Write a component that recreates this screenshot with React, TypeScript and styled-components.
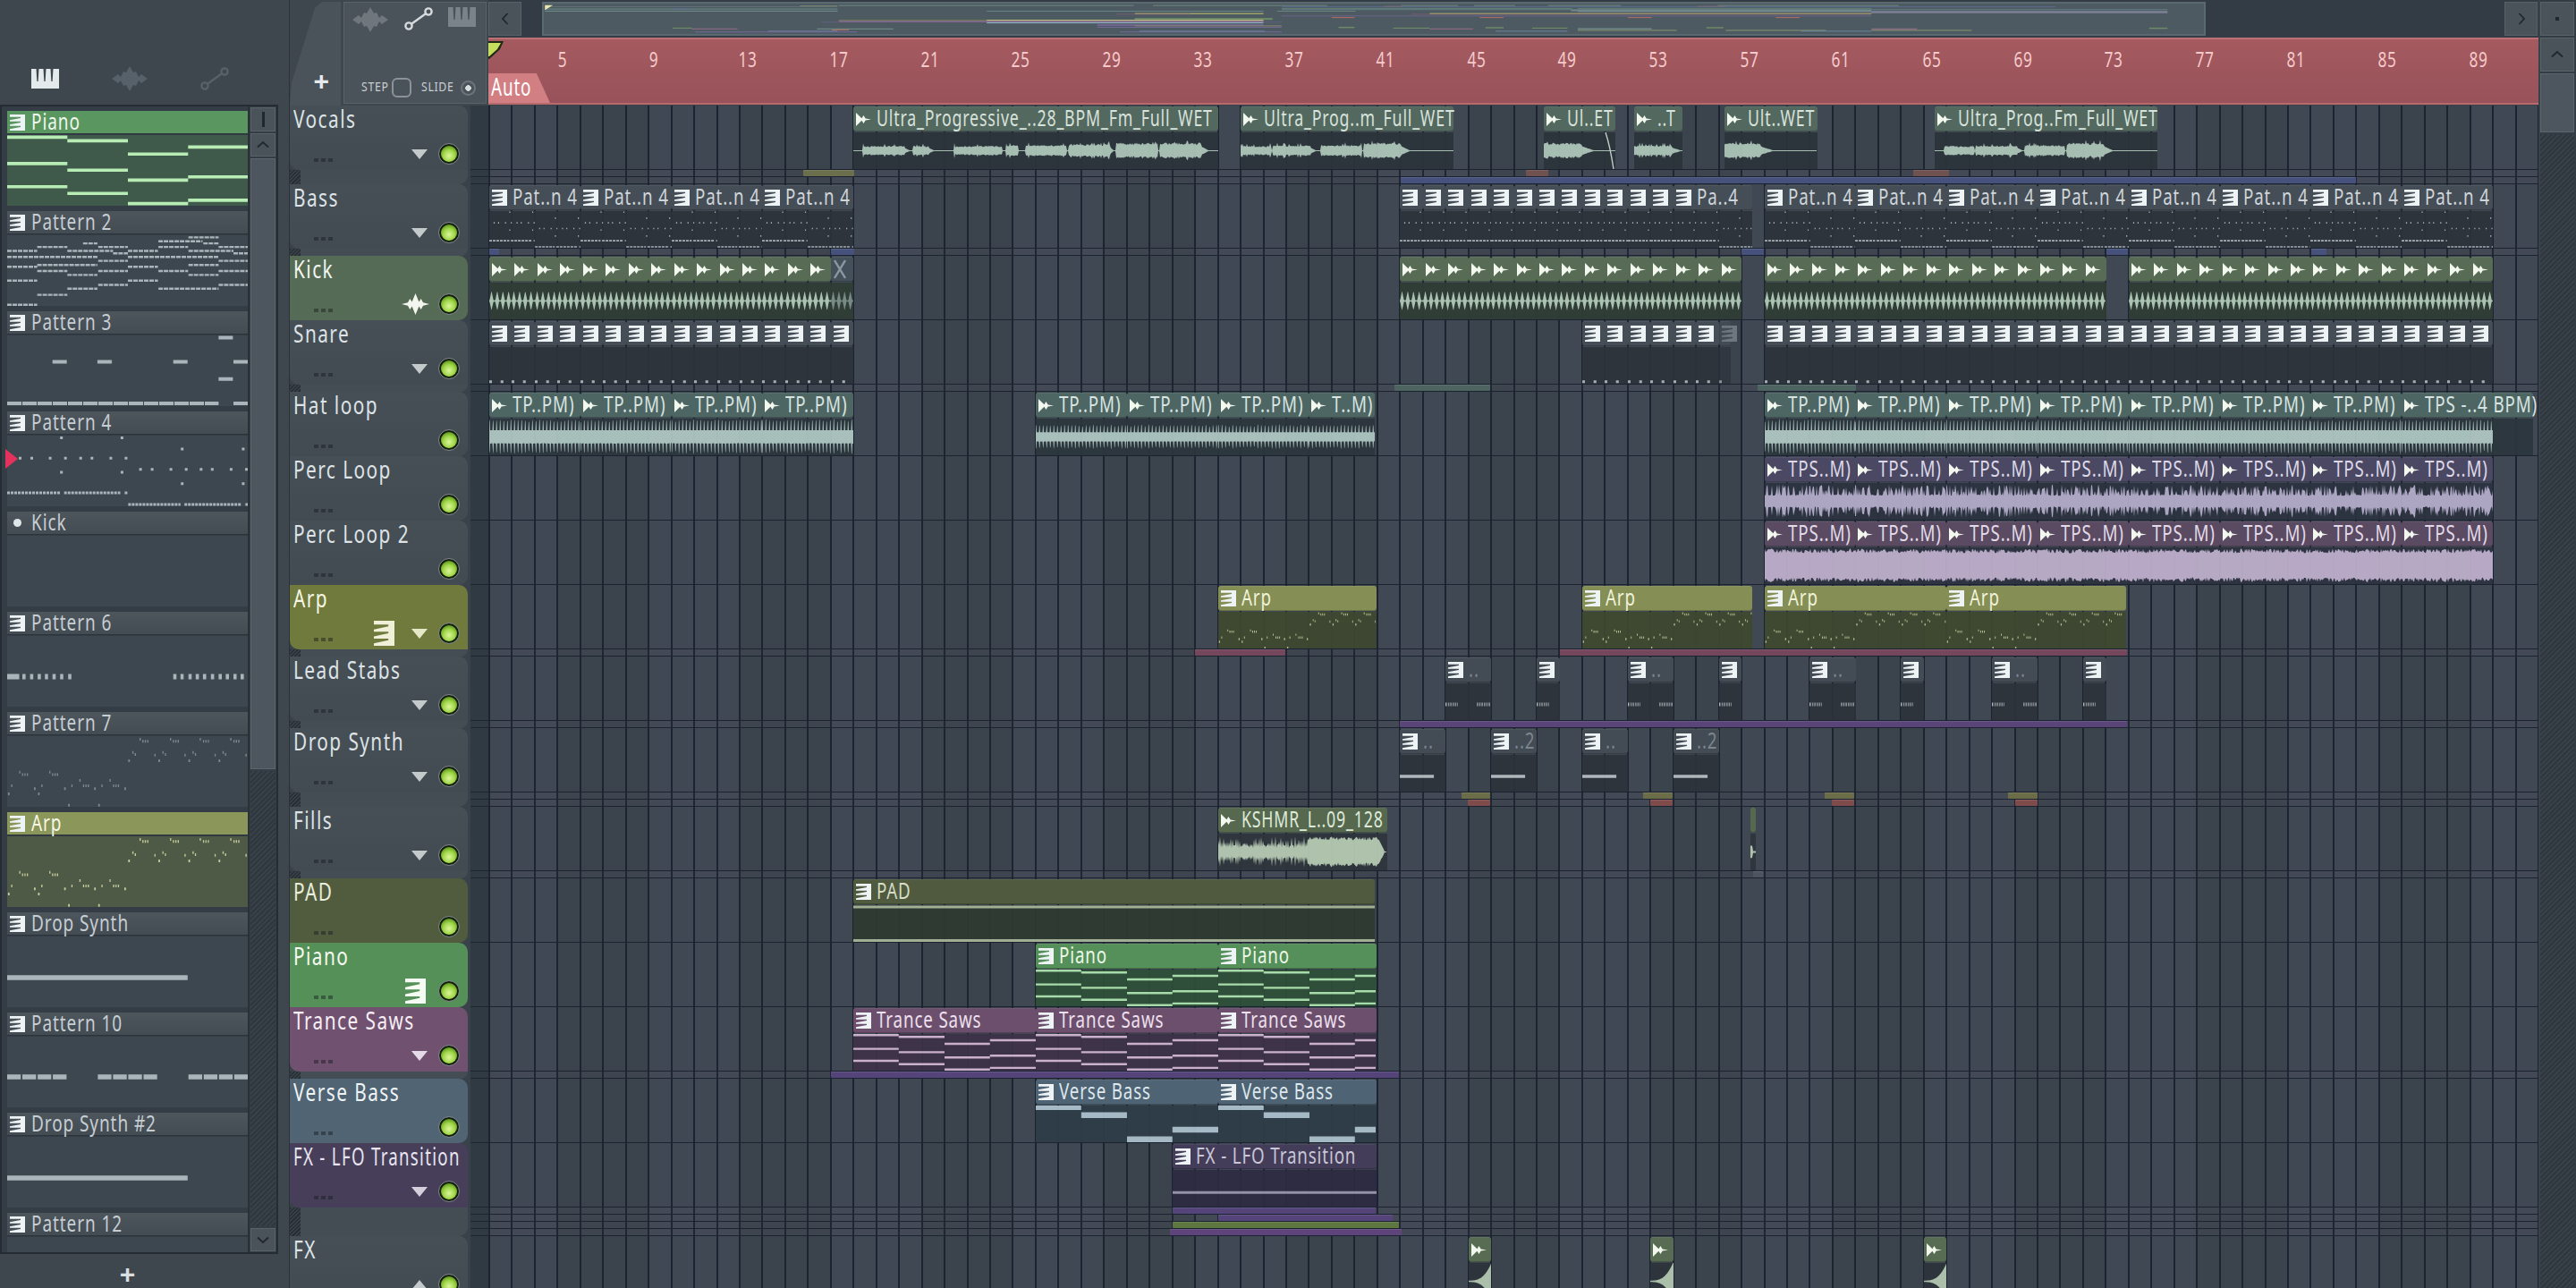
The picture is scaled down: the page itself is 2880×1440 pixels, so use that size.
import React from "react";
import styled, { createGlobalStyle } from "styled-components";

const BAR = 25.456;
const ORIGIN = 546;
const FONT = `"Noto Sans", "Open Sans", sans-serif`;

const Global = createGlobalStyle`
  html, body {
    margin: 0;
    width: 2880px;
    height: 1440px;
    overflow: hidden;
    background: #3f474e;
    font-family: ${FONT};
  }
  * { box-sizing: border-box; }
`;

/* the app's face is a tall condensed one, none is installed so squeeze Noto */
const Narrow = styled.span<{ $s?: number }>`
  display: inline-block;
  flex: none;
  margin-bottom: 4px;
  white-space: nowrap;
  transform: scaleX(${(p) => p.$s ?? 0.75});
  transform-origin: 0 50%;
`;

/* ---------- drawings ---------- */

const PatIcon = ({ w = 17, h = 18, color = "#eef3f5" }: { w?: number; h?: number; color?: string }) => (
  <svg width={w} height={h} viewBox="0 0 17 18" preserveAspectRatio="none" style={{ flex: "none" }}>
    <path
      fill={color}
      fillRule="evenodd"
      d="M0 0H17V18H0Z M0 2.8H12V4L0 6.3Z M0 7.8H12V9L0 11.3Z M0 12.8H12V14L0 16.3Z"
    />
  </svg>
);

const AudioIcon = ({ w = 17, h = 15, color = "#f2f8ee" }: { w?: number; h?: number; color?: string }) => (
  <svg width={w} height={h} viewBox="0 0 16 18" preserveAspectRatio="none" style={{ flex: "none" }}>
    <path fill={color} d="M0 0L6 7.6L8 3.5L10 7.8L16 9L10 10.2L8 14.5L6 10.4L0 18Z" />
  </svg>
);

const MutedIcon = () => (
  <svg width={14} height={22} viewBox="0 0 14 22" style={{ flex: "none" }}>
    <path d="M1 1L13 21M13 1L1 21" stroke="#8b98a0" strokeWidth={2.4} fill="none" />
  </svg>
);

const PianoGlyph = ({ color }: { color: string }) => (
  <svg width={31} height={22} viewBox="0 0 31 22">
    <path
      fill={color}
      fillRule="evenodd"
      d="M0 0H31V22H0Z M5.5 0H8.5L7.6 14H6.3Z M13.5 0H16.5L15.6 14H14.3Z M21.5 0H24.5L23.6 14H22.3Z"
    />
  </svg>
);

const WaveGlyph = ({ color, w = 40, h = 28, slim }: { color: string; w?: number; h?: number; slim?: boolean }) => (
  <svg width={w} height={h} viewBox="0 0 40 28" preserveAspectRatio="none">
    <path
      fill={color}
      d={
        slim
          ? "M0 14L9 12L12 7L15 11L20 0L25 11L28 7L31 12L40 14L31 16L28 21L25 17L20 28L15 17L12 21L9 16Z"
          : "M0 14L7 9L10 12L13 6L16 7L20 0L24 7L27 6L30 12L33 9L40 14L33 19L30 16L27 22L24 21L20 28L16 21L13 22L10 16L7 19Z"
      }
    />
  </svg>
);

const KnobGlyph = ({ color }: { color: string }) => (
  <svg width={32} height={26} viewBox="0 0 32 26" fill="none" stroke={color} strokeWidth={2.4}>
    <circle cx={5} cy={21} r={3.6} />
    <circle cx={27} cy={5} r={3.6} />
    <path d="M8 18.8L24 7.2" />
  </svg>
);

/* ---------- note data, in units of the picker preview ---------- */

type Note = [number, number, number];
type Pat = { notes: Note[]; dash?: string };

const mk = (top: number, list: Note[], dash?: string): Pat => ({
  notes: list.map(([a, b, y]) => [(a - 18) / 602, (b - 18) / 602, (y - top) / 235]),
  dash,
});
const dots = (xs: number[], y: number, w = 7): Note[] => xs.map((x) => [x, x + w, y]);

const pianoPat = mk(455, [
  [18, 168, 462], [18, 168, 550], [18, 168, 627],
  [168, 319, 474], [168, 319, 572], [168, 319, 649],
  [319, 469, 518], [319, 469, 605], [319, 469, 683],
  [469, 620, 495], [469, 620, 594], [469, 620, 672],
]);

const pat2 = mk(790, [
  [470, 545, 797], [395, 505, 810], [207, 243, 817], [507, 545, 817],
  [93, 168, 829], [245, 319, 829], [395, 469, 829], [545, 620, 829],
  [18, 93, 842], [168, 282, 842], [319, 394, 842], [470, 582, 842],
  [282, 319, 850], [582, 620, 850], [18, 243, 862], [319, 545, 862],
  [245, 319, 875], [545, 620, 875], [93, 243, 889], [470, 545, 889],
  [18, 93, 895], [319, 394, 895], [93, 168, 909], [245, 319, 909],
  [395, 469, 909], [545, 620, 909], [168, 243, 922], [470, 545, 922],
  [18, 93, 941], [319, 394, 941], [245, 319, 955], [545, 620, 955],
  [168, 243, 968], [395, 545, 968], [93, 168, 988], [18, 93, 1021],
], "5 1");

const pat3 = mk(1128, [
  [545, 582, 1135], [131, 168, 1216], [243, 281, 1216], [432, 469, 1216],
  [582, 620, 1216], [545, 582, 1273], [18, 545, 1354], [582, 620, 1354],
], "16 1");

const pat4 = mk(23, [
  ...dots([150, 301], 30),
  ...dots([451, 603], 68),
  ...dots([47, 76, 122, 160, 198, 226, 273, 311], 98),
  ...dots([347, 376, 423, 461, 498, 526, 573, 611], 135),
  ...dots([150, 301], 145),
  ...dots([451, 603], 183),
  [18, 150, 213], [160, 300, 213], [311, 318, 213],
  [320, 450, 252], [460, 602, 252], [612, 620, 252],
], "3 1");

const pat6 = mk(695, [
  [18, 48, 830],
  ...dots([56, 75, 94, 112, 131, 150, 170, 432, 450, 470, 488, 506, 526, 545, 563, 582, 600], 830, 8),
]);

const pat7 = mk(1030, [
  ...dots([348, 424, 498, 574], 1040, 3),
  ...[355, 431, 506, 582].flatMap((x) => dots([x, x + 6, x + 12], 1047, 3)),
  ...dots([330, 405, 480, 555], 1084, 3),
  ...dots([336, 411, 486, 561], 1091, 3),
  ...dots([385, 460, 535, 612], 1093, 3),
  ...dots([320, 395, 470, 545], 1112, 4),
  ...dots([48, 123], 1150, 3),
  ...[55, 130].flatMap((x) => dots([x, x + 6, x + 12], 1158, 3)),
  ...dots([198, 273], 1177, 3),
  ...dots([28, 103, 178, 253], 1195, 3),
  ...[207, 282].flatMap((x) => dots([x, x + 6, x + 12], 1195, 3)),
  ...dots([85, 160, 235, 310], 1205, 4),
  ...dots([20, 95], 1222, 4),
  ...dots([170, 245], 1260, 4),
]);

const dropPat = mk(0, [[18, 468, 137]]);

const pat10 = mk(600, [
  [18, 52, 734], [56, 90, 734], [94, 128, 734], [132, 166, 734],
  [244, 278, 734], [282, 316, 734], [320, 354, 734], [358, 392, 734],
  [470, 504, 734], [508, 542, 734], [546, 580, 734], [584, 618, 734],
]);

const bassPat = mk(0, [
  [18, 168, 10], [168, 319, 62], [319, 469, 216], [469, 620, 155],
].map(([a, b, y]) => [a, b, y] as Note));
const padPat = mk(0, [[18, 620, 12], [18, 620, 226]]);
const lfoPat = mk(0, [[18, 620, 145]]);
const snarePat = mk(0, [[18, 90, 222], [319, 391, 222]]);

const NoteLayer = styled.svg`
  position: absolute;
  left: 0;
  top: 0;
`;

const Notes = ({
  pat, w, h, span, color, thick, dash,
}: { pat: Pat; w: number; h: number; span: number; color: string; thick: number; dash?: string }) => {
  let d = "";
  for (let o = 0; o < w; o += span) {
    for (const [a, b, y] of pat.notes) {
      const yy = (y * h).toFixed(1);
      d += `M${(o + a * span).toFixed(1)} ${yy}H${(o + b * span).toFixed(1)}`;
    }
  }
  return (
    <NoteLayer width={w} height={h} viewBox={`0 0 ${w} ${h}`}>
      <path d={d} stroke={color} strokeWidth={thick} strokeDasharray={dash ?? pat.dash} fill="none" />
    </NoteLayer>
  );
};

/* ---------- wave forms ---------- */

type Env = [number, number, number, number?];
type Wave =
  | { t: "kick" }
  | { t: "hat"; a: number; w?: number }
  | { t: "perc"; w?: number }
  | { t: "dense"; w?: number }
  | { t: "env"; env: Env[] }
  | { t: "kshmr" }
  | { t: "swell" }
  | { t: "sliver" };

const rng = (seed: number) => {
  let s = seed % 233280;
  return () => (s = (s * 9301 + 49297) % 233280) / 233280;
};

const ampAt = (wave: Wave, x: number, r: () => number): number => {
  switch (wave.t) {
    case "kick": {
      const f = (x % 6.364) / 6.364;
      return 0.7 + 10.5 * Math.max(0, 1 - Math.abs(f - 0.4) * 2.9);
    }
    case "hat":
      return x % 4 < 1 ? wave.a * (0.8 + 0.2 * r()) : wave.a * 0.38;
    case "perc":
      return 6 + (r() > 0.5 ? 4 + 9 * r() : 2 * r());
    case "dense":
      return 14 + 5 * r();
    case "env": {
      for (const [a, b, v, tail] of wave.env) {
        if (x >= a && x <= b) return v * (0.72 + 0.28 * r()) + (r() > 0.93 ? 3 : 0);
        if (tail && x > b && x <= b + tail) return 0.5 + v * 0.55 * (1 - (x - b) / tail) * (0.8 + 0.2 * r());
      }
      return 0.5;
    }
    case "kshmr":
      if (x < 100) return Math.round(x) % 2 === 0 ? 7 + 11 * r() : 4 + 4 * r();
      if (x < 180) return 13 + 4 * r();
      if (x < 186) return 13 - (x - 180) * 2;
      return 0.6;
    case "swell":
      return 0.8 + 19 * Math.pow(x / 25, 3);
    case "sliver":
      return x < 3 ? 7 : 1;
  }
};

const WaveForm = ({ wave, w, h, color, seed }: { wave: Wave; w: number; h: number; color: string; seed: number }) => {
  const r = rng(seed * 97 + 11);
  const c = h / 2;
  const top: string[] = [];
  const bottom: string[] = [];
  const step = wave.t === "kick" || wave.t === "hat" ? 0.5 : 1;
  for (let x = 0; x <= w + 1; x += step) {
    const a = ampAt(wave, x, r);
    top.push(`${x} ${(c - a).toFixed(1)}`);
    bottom.unshift(`${x} ${(c + a * (wave.t === "swell" ? 1 : 0.9 + 0.1 * r())).toFixed(1)}`);
  }
  return (
    <NoteLayer width={w} height={h} viewBox={`0 0 ${w} ${h}`}>
      <path d={`M${top.join("L")}L${bottom.join("L")}Z`} fill={color} />
    </NoteLayer>
  );
};

/* ---------- track data ---------- */

type Clip = {
  k: number;
  w: number;
  label?: string;
  icon?: "pat" | "wave" | "x" | "none";
  wave?: Wave;
  waveW?: number;
  dim?: boolean;
  faint?: boolean;
  fade?: boolean;
};
type Strip = [number, number, number, string];
type Theme = {
  head: string;
  body: string;
  ink: string;
  text: string;
  pat?: Pat;
  span?: number;
  thick?: number;
  dash?: string;
  squeeze?: number;
};
type Track = {
  name: string;
  squeeze?: number;
  lanes: number;
  bg?: string;
  text?: string;
  arrow?: "down" | "up";
  arrowColor?: string;
  headIcon?: "pat" | "wave";
  theme: Theme;
  clips: Clip[];
  strips?: Strip[];
};

const rep = (start: number, count: number, step: number, make: (k: number, i: number) => Omit<Clip, "k" | "w">, w = step): Clip[] =>
  Array.from({ length: count }, (_, i) => ({ k: start + i * step, w, ...make(start + i * step, i) }));

const BLUE = "#47527c";
const PURPLE = "#54447a";
const kickWave: Wave = { t: "kick" };
const hat = (a: number, w?: number): Wave => ({ t: "hat", a, w });

const tracks: Track[] = [
  {
    name: "Vocals",
    lanes: 2,
    arrow: "down",
    theme: { head: "#53685e", body: "#2c343b", ink: "#afc7ba", text: "#d7e2dc", squeeze: 0.71 },
    clips: [
      {
        k: 16, w: 16, label: "Ultra_Progressive_..28_BPM_Fm_Full_WET", icon: "wave",
        wave: { t: "env", env: [[11, 57, 5.5, 6], [67, 84, 5.5, 6], [113, 166, 5.5], [171, 184, 6.5], [193, 238, 6.5], [241, 287, 7.5, 4], [294, 340, 9], [343, 389, 9, 8]] },
      },
      {
        k: 33, w: 9.35, label: "Ultra_Prog..m_Full_WET", icon: "wave",
        wave: { t: "env", env: [[0, 34, 5.5], [36, 78, 6, 6], [90, 135, 6.5], [138, 179, 9, 10]] },
      },
      { k: 46.3, w: 3.15, label: "Ul..ET", icon: "wave", fade: true, wave: { t: "env", env: [[0, 42, 9, 14]] } },
      { k: 50.3, w: 2.1, label: "..T", icon: "wave", wave: { t: "env", env: [[0, 42, 6, 10]] } },
      { k: 54.26, w: 4.05, label: "Ult..WET", icon: "wave", wave: { t: "env", env: [[0, 40, 9, 14]] } },
      {
        k: 63.5, w: 9.75, label: "Ultra_Prog..Fm_Full_WET", icon: "wave",
        wave: { t: "env", env: [[11, 44, 5.5], [46, 92, 6, 6], [101, 145, 6.5], [148, 189, 9, 10]] },
      },
    ],
    strips: [
      [0, 898, 955, "#6c6f4c"],
      [0, 1706, 1731, "#6f5150"],
      [0, 2139, 2179, "#6f5150"],
      [1, 1566, 2634, BLUE],
    ],
  },
  {
    name: "Bass",
    lanes: 1,
    arrow: "down",
    theme: { head: "#454d56", body: "#2c333b", ink: "#aeb7bc", text: "#cfd6da", pat: pat4, span: 102, thick: 1.6 },
    clips: [
      ...rep(0, 4, 4, () => ({ label: "Pat..n 4", icon: "pat" })),
      ...rep(40, 12, 1, () => ({ icon: "pat" })),
      { k: 52, w: 3.45, label: "Pa..4", icon: "pat" },
      ...rep(56, 8, 4, () => ({ label: "Pat..n 4", icon: "pat" })),
    ],
    strips: [
      [0, 547, 558, BLUE],
      [0, 929, 955, BLUE],
      [0, 1947, 1972, BLUE],
      [0, 2355, 2379, BLUE],
      [0, 2584, 2601, BLUE],
    ],
  },
  {
    name: "Kick",
    lanes: 0,
    bg: "#566b55",
    text: "#f2f6ef",
    headIcon: "wave",
    theme: { head: "#576b55", body: "#2f3d35", ink: "#b3ccb9", text: "#e6eee2" },
    clips: [
      ...rep(0, 15, 1, () => ({ icon: "wave", wave: kickWave })),
      { k: 15, w: 1, icon: "x", wave: kickWave, dim: true },
      ...rep(40, 15, 1, () => ({ icon: "wave", wave: kickWave })),
      ...rep(56, 15, 1, () => ({ icon: "wave", wave: kickWave })),
      ...rep(72, 16, 1, () => ({ icon: "wave", wave: kickWave })),
    ],
  },
  {
    name: "Snare",
    lanes: 1,
    arrow: "down",
    theme: { head: "#454d56", body: "#2c333b", ink: "#aeb7bc", text: "#cfd6da", pat: snarePat, span: BAR, thick: 3 },
    clips: [
      ...rep(0, 16, 1, () => ({ icon: "pat" })),
      ...rep(48, 6, 1, () => ({ icon: "pat" })),
      { k: 54, w: 0.5, icon: "pat", faint: true },
      ...rep(56, 32, 1, () => ({ icon: "pat" })),
    ],
    strips: [
      [0, 1559, 1666, "#4d6460"],
      [0, 1965, 2075, "#4d6460"],
    ],
  },
  {
    name: "Hat loop",
    lanes: 0,
    theme: { head: "#4e6663", body: "#2c363d", ink: "#b0c9c3", text: "#d8e4e1" },
    clips: [
      ...rep(0, 4, 4, () => ({ label: "TP..PM)", icon: "wave", wave: hat(20) })),
      ...rep(24, 3, 4, () => ({ label: "TP..PM)", icon: "wave", wave: hat(14) })),
      { k: 36, w: 2.9, label: "T..M)", icon: "wave", wave: hat(14) },
      ...rep(56, 7, 4, () => ({ label: "TP..PM)", icon: "wave", wave: hat(20) })),
      { k: 84, w: 5.76, waveW: 102, label: "TPS -..4 BPM)", icon: "wave", wave: hat(20) },
    ],
  },
  {
    name: "Perc Loop",
    lanes: 0,
    theme: { head: "#4b4864", body: "#2c3340", ink: "#b5aecb", text: "#dcd8e8" },
    clips: rep(56, 8, 4, () => ({ label: "TPS..M)", icon: "wave", wave: { t: "perc" } })),
  },
  {
    name: "Perc Loop 2",
    lanes: 0,
    theme: { head: "#5a4a62", body: "#2d3340", ink: "#c0b1ce", text: "#e2dae8" },
    clips: rep(56, 8, 4, () => ({ label: "TPS..M)", icon: "wave", wave: { t: "dense" } })),
  },
  {
    name: "Arp",
    lanes: 1,
    bg: "#707a3c",
    text: "#f5f6e4",
    arrow: "down",
    arrowColor: "#e6e8c8",
    headIcon: "pat",
    theme: { head: "#858e55", body: "#3f482f", ink: "#b9bf92", text: "#f0f2da", pat: pat7, span: 204, thick: 2.4 },
    clips: [
      { k: 32, w: 6.95, label: "Arp", icon: "pat" },
      { k: 48, w: 7.45, label: "Arp", icon: "pat" },
      { k: 56, w: 8, label: "Arp", icon: "pat" },
      { k: 64, w: 7.9, label: "Arp", icon: "pat" },
    ],
    strips: [
      [0, 1336, 1437, "#74475c"],
      [0, 1744, 2378, "#74475c"],
    ],
  },
  {
    name: "Lead Stabs",
    lanes: 1,
    arrow: "down",
    theme: { head: "#434b54", body: "#2c333b", ink: "#b9c0c5", text: "#7c858c", pat: pat6, span: 51, thick: 4, dash: "1.4 1" },
    clips: [42, 46, 50, 54, 58, 62, 66, 70].map((k, i) =>
      i % 2 === 0 ? { k, w: 2, label: "..", icon: "pat" as const } : { k, w: 1, icon: "pat" as const },
    ),
    strips: [[0, 1565, 2378, "#5a4578"]],
  },
  {
    name: "Drop Synth",
    lanes: 2,
    arrow: "down",
    theme: { head: "#434b54", body: "#2c333b", ink: "#b9c0c5", text: "#7c858c", pat: dropPat, span: 51, thick: 3.5 },
    clips: [
      { k: 40, w: 2, label: "..", icon: "pat" },
      { k: 44, w: 2, label: "..2", icon: "pat" },
      { k: 48, w: 2, label: "..", icon: "pat" },
      { k: 52, w: 2, label: "..2", icon: "pat" },
    ],
    strips: [
      [0, 1634, 1666, "#6b6c48"], [1, 1641, 1666, "#7f4b4b"],
      [0, 1837, 1870, "#6b6c48"], [1, 1845, 1870, "#7f4b4b"],
      [0, 2040, 2073, "#6b6c48"], [1, 2048, 2073, "#7f4b4b"],
      [0, 2245, 2278, "#6b6c48"], [1, 2253, 2278, "#7f4b4b"],
    ],
  },
  {
    name: "Fills",
    lanes: 1,
    arrow: "down",
    theme: { head: "#56694f", body: "#2e353c", ink: "#b8ccb4", text: "#dfe9da", squeeze: 0.71 },
    clips: [
      { k: 32, w: 7.42, label: "KSHMR_L..09_128", icon: "wave", wave: { t: "kshmr" } },
      { k: 55.4, w: 0.22, icon: "none", wave: { t: "sliver" } },
    ],
    strips: [[0, 1960, 1971, "#4d565f"]],
  },
  {
    name: "PAD",
    lanes: 0,
    bg: "#515c3f",
    text: "#e9eddc",
    theme: { head: "#4f5a3e", body: "#2e3a30", ink: "#a9b79a", text: "#d6dcc6", pat: padPat, span: 600, thick: 3 },
    clips: [{ k: 16, w: 22.9, label: "PAD", icon: "pat" }],
  },
  {
    name: "Piano",
    lanes: 0,
    bg: "#559058",
    text: "#f5fbf2",
    headIcon: "pat",
    theme: { head: "#55905a", body: "#2f5039", ink: "#b0e7b0", text: "#ecf8e8", pat: pianoPat, span: 204, thick: 2.4 },
    clips: [
      { k: 24, w: 8, label: "Piano", icon: "pat" },
      { k: 32, w: 6.95, label: "Piano", icon: "pat" },
    ],
  },
  {
    name: "Trance Saws",
    lanes: 1,
    bg: "#70516f",
    text: "#f7eff6",
    arrow: "down",
    arrowColor: "#e4dbe6",
    theme: { head: "#6c4f6d", body: "#3e3248", ink: "#d5b9d6", text: "#eee0ee", pat: pianoPat, span: 204, thick: 2.4 },
    clips: [
      { k: 16, w: 8, label: "Trance Saws", icon: "pat" },
      { k: 24, w: 8, label: "Trance Saws", icon: "pat" },
      { k: 32, w: 6.95, label: "Trance Saws", icon: "pat" },
    ],
    strips: [[0, 929, 1564, PURPLE]],
  },
  {
    name: "Verse Bass",
    lanes: 0,
    bg: "#506473",
    text: "#eef3f6",
    theme: { head: "#4e6373", body: "#2e3d48", ink: "#aec2cf", text: "#dde7ed", pat: bassPat, span: 204, thick: 6.5 },
    clips: [
      { k: 24, w: 8, label: "Verse Bass", icon: "pat" },
      { k: 32, w: 6.95, label: "Verse Bass", icon: "pat" },
    ],
  },
  {
    name: "FX - LFO Transition",
    squeeze: 0.69,
    lanes: 4,
    bg: "#473f5a",
    text: "#e8e5f0",
    arrow: "down",
    arrowColor: "#d3d0dc",
    theme: { head: "#443d59", body: "#2d2b43", ink: "#9c98ae", text: "#c9c6d8", pat: lfoPat, span: 240, thick: 3 },
    clips: [{ k: 30, w: 8.95, label: "FX - LFO Transition", icon: "pat" }],
    strips: [
      [0, 1311, 1538, PURPLE],
      [1, 1362, 1557, PURPLE],
      [2, 1311, 1564, "#5e7640"],
      [3, 1308, 1567, "#5e447a"],
    ],
  },
  {
    name: "FX",
    lanes: 0,
    arrow: "up",
    theme: { head: "#586c53", body: "#2c333b", ink: "#b4c9b2", text: "#e0e8dc" },
    clips: [43, 51, 63].map((k) => ({ k, w: 1, icon: "wave" as const, wave: { t: "swell" } as Wave })),
  },
];

const pickerItems: { name: string; pat?: Pat; thick?: number; icon?: "dot"; head?: string; body?: string; ink?: string; text?: string }[] = [
  { name: "Piano", pat: pianoPat, thick: 3.6, head: "#5a9660", body: "#3f5a4b", ink: "#b7ecb5", text: "#f0f8ec" },
  { name: "Pattern 2", pat: pat2, thick: 2.4 },
  { name: "Pattern 3", pat: pat3, thick: 4 },
  { name: "Pattern 4", pat: pat4, thick: 3 },
  { name: "Kick", icon: "dot" },
  { name: "Pattern 6", pat: pat6, thick: 6 },
  { name: "Pattern 7", pat: pat7, thick: 3, ink: "#7e888e" },
  { name: "Arp", pat: pat7, thick: 3, head: "#8a965a", body: "#4e5a45", ink: "#c5c99c", text: "#f7f8e6" },
  { name: "Drop Synth", pat: dropPat, thick: 5.5 },
  { name: "Pattern 10", pat: pat10, thick: 5.5 },
  { name: "Drop Synth #2", pat: dropPat, thick: 5.5 },
  { name: "Pattern 12" },
];

const overviewMarks: [number, number, number, number, string][] = [
  [277, 310, 14, 2, "#8f9a70"], [311, 570, 12, 2, "#86a58c"], [587, 740, 12, 2, "#86a58c"],
  [805, 855, 12, 2, "#86a58c"], [869, 905, 12, 2, "#86a58c"], [934, 998, 12, 2, "#86a58c"], [1083, 1242, 12, 2, "#86a58c"],
  [53, 310, 16, 2, "#71808a"], [53, 310, 23, 2, "#5f8570"], [53, 310, 27, 3, "#66808a"], [53, 310, 34, 2, "#88a7a2"],
  [165, 180, 23, 3, "#5d6c92"], [700, 1380, 17, 3, "#5f6e98"], [790, 806, 15, 3, "#7c6f7a"], [1065, 1090, 15, 3, "#7c6f7a"],
  [700, 955, 23, 3, "#5f8570"], [960, 1218, 23, 3, "#5f8570"], [700, 1478, 27, 3, "#66808a"], [960, 1478, 34, 3, "#7f8fa0"],
  [1218, 1478, 38, 3, "#a99cbc"], [954, 1218, 31, 3, "#88a7a2"], [696, 765, 33, 3, "#6f8a86"],
  [441, 684, 34, 2, "#78a09a"], [571, 684, 42, 3, "#d0d070"], [830, 1218, 42, 3, "#d0d070"],
  [555, 620, 45, 2, "#8f5c78"], [814, 1218, 45, 2, "#8f5c78"], [700, 1218, 51, 3, "#6f6490"], [744, 764, 57, 3, "#c07060"],
  [874, 895, 57, 3, "#c07060"], [1004, 1025, 57, 3, "#c07060"], [1134, 1155, 57, 3, "#c07060"],
  [571, 692, 60, 7, "#6f8a66"], [311, 441, 66, 4, "#67784e"], [311, 441, 71, 4, "#a070a4"], [441, 684, 67, 4, "#d2d080"],
  [441, 684, 71, 4, "#a070a4"], [441, 684, 76, 4, "#8fb0c0"], [296, 311, 75, 2, "#6f6490"], [684, 700, 75, 2, "#6f6490"],
  [538, 684, 84, 5, "#7a6aa0"], [571, 700, 88, 3, "#8f8a70"], [538, 700, 93, 3, "#7a6aa0"],
  [165, 182, 96, 4, "#6f8a66"], [182, 222, 99, 4, "#8f6a88"], [292, 359, 99, 4, "#6f8a86"], [305, 320, 103, 3, "#c07060"],
  [249, 310, 108, 3, "#6f8aa8"], [185, 327, 111, 3, "#7a6aa0"], [558, 700, 111, 3, "#7a6aa0"], [575, 685, 108, 3, "#6f8aa8"],
  [750, 764, 93, 5, "#6f8a66"], [798, 830, 96, 4, "#6f8a66"], [830, 868, 99, 4, "#8f6a88"], [879, 895, 94, 5, "#6f8a66"],
  [920, 951, 96, 4, "#6f8a66"], [888, 951, 108, 3, "#6f8aa8"], [960, 1025, 98, 5, "#6f8a86"], [960, 1047, 105, 3, "#8f9a70"],
  [1073, 1088, 94, 5, "#6f8a66"], [1090, 1178, 105, 3, "#8f9a70"], [1156, 1218, 108, 3, "#6f8aa8"],
  [1218, 1258, 99, 5, "#8f6a88"], [1218, 1306, 105, 3, "#8f9a70"], [1462, 1478, 96, 5, "#6f8a66"],
];

/* ---------- styled parts ---------- */

const Page = styled.div`
  display: flex;
  width: 2880px;
  height: 1440px;
  overflow: hidden;
  background: #3f474e;
`;

const PickerPanel = styled.div`
  display: flex;
  flex-direction: column;
  flex: none;
  width: 324px;
  height: 100%;
  padding-right: 12px;
  background: #3f474e;
  border-right: 1px solid #2b3339;
`;
const PickerTop = styled.div`
  flex: none;
  height: 117px;
  display: flex;
  align-items: center;
  justify-content: space-around;
  padding: 58px 26px 0 6px;
`;
const PickerBody = styled.div`
  flex: 1;
  min-height: 0;
  display: flex;
  border: 2px solid #252d33;
  background: #343d45;
`;
const PickerList = styled.div`
  flex: 1;
  min-width: 0;
  overflow: hidden;
  padding: 5px 0 0 6px;
  border-right: 2px solid #2a3238;
`;
const PickerFooter = styled.div`
  flex: none;
  height: 38px;
  display: flex;
  align-items: center;
  justify-content: center;
  padding: 8px 26px 0 0;
  color: #d9dee1;
  font: bold 30px "Liberation Sans", sans-serif;
`;
const PickerItem = styled.div`
  height: 112px;
  padding-right: 2px;
`;
const ItemHead = styled.div<{ $bg?: string; $color?: string }>`
  height: 26px;
  width: 270px;
  display: flex;
  align-items: center;
  gap: 7px;
  padding-left: 3px;
  background: ${(p) => p.$bg ?? "linear-gradient(#4d555d, #434b53)"};
  border-bottom: 1px solid #2c343b;
  color: ${(p) => p.$color ?? "#c6ced3"};
  font-size: 25px;
  letter-spacing: 1.2px;
`;
const ItemBody = styled.div<{ $bg?: string }>`
  position: relative;
  width: 270px;
  height: 79px;
  margin-top: 1px;
  background: ${(p) => p.$bg ?? "#3d4750"};
  overflow: hidden;
`;
const ChannelDot = styled.span`
  width: 9px;
  height: 9px;
  margin: 0 4px;
  border-radius: 50%;
  background: #dfe6ea;
`;
const PlayMarker = styled.div`
  position: absolute;
  left: 6px;
  top: 502px;
  width: 0;
  height: 0;
  border-left: 14px solid #e5325c;
  border-top: 11px solid transparent;
  border-bottom: 11px solid transparent;
`;

const ScrollCol = styled.div`
  flex: none;
  width: 30px;
  display: flex;
  flex-direction: column;
  gap: 2px;
  padding: 1px;
`;
const ScrollBtn = styled.div<{ $h: number }>`
  flex: none;
  height: ${(p) => p.$h}px;
  display: flex;
  align-items: center;
  justify-content: center;
  background: #4a525a;
  border: 1px solid #5a6269;
  color: #1f272d;
`;
const ScrollThumb = styled.div<{ $h: number }>`
  flex: none;
  height: ${(p) => p.$h}px;
  background: #4d565e;
  border: 1px solid #5d656c;
`;
const ScrollHatch = styled.div`
  flex: 1;
  background: repeating-linear-gradient(135deg, #2f373e 0 2px, #394148 2px 4px);
`;
const SmallBar = styled.div<{ $dot?: boolean }>`
  width: ${(p) => (p.$dot ? 4 : 3)}px;
  height: ${(p) => (p.$dot ? 4 : 17)}px;
  background: #20282e;
`;

const Workspace = styled.div`
  flex: 1;
  min-width: 0;
  display: flex;
  flex-direction: column;
  padding-right: 2px;
  background: #39414a;
`;
const TopArea = styled.div`
  flex: none;
  height: 118px;
  display: flex;
`;
const Tools = styled.div`
  flex: none;
  width: 222px;
  display: flex;
  gap: 3px;
  padding-top: 2px;
  background: #3f474e;
`;
const AddTab = styled.div`
  flex: none;
  width: 57px;
  display: flex;
  align-items: flex-end;
  justify-content: flex-end;
  padding: 0 13px 12px 0;
  background: #4b535a;
  clip-path: polygon(0 100%, 2px 78%, 28px 6%, 36px 0, 100% 0, 100% 100%);
  color: #e6eaec;
  font: bold 30px/1 "Liberation Sans", sans-serif;
`;
const ToolBox = styled.div`
  flex: 1;
  min-width: 0;
  margin: 0 2px 2px 0;
  display: flex;
  flex-direction: column;
  justify-content: space-between;
  padding: 5px 11px 5px 9px;
  background: #4b535a;
  border: 1px solid #5a6269;
`;
const ToolIcons = styled.div`
  display: flex;
  align-items: flex-start;
  justify-content: space-between;
`;
const ToolOptions = styled.div`
  display: flex;
  align-items: center;
  gap: 4px;
  padding-left: 10px;
  color: #c9cfd2;
  font-size: 15px;
  letter-spacing: 0.8px;
`;
const OptionLabel = styled.span<{ $w: number }>`
  flex: none;
  width: ${(p) => p.$w}px;
`;
const StepToggle = styled.span`
  flex: none;
  width: 22px;
  height: 22px;
  margin-right: 7px;
  border: 2px solid #8b9398;
  border-radius: 6px;
`;
const SlideRadio = styled.span`
  flex: none;
  width: 17px;
  height: 17px;
  margin-left: 3px;
  border: 2px solid #6d757b;
  border-radius: 50%;
  background: radial-gradient(circle, #d7dcdf 0 3px, #4b535a 3.6px);
`;
const TopRight = styled.div`
  flex: 1;
  min-width: 0;
  display: flex;
  flex-direction: column;
`;
const OverviewBar = styled.div`
  flex: none;
  height: 42px;
  display: flex;
  align-items: stretch;
  padding: 2px 0;
  background: #333c44;
`;
const NavBtn = styled.div`
  flex: none;
  width: 37px;
  display: flex;
  align-items: center;
  justify-content: center;
  background: #4a525a;
  border: 1px solid #586067;
`;
const Overview = styled.div`
  position: relative;
  flex: none;
  width: 1860px;
  margin: 0 334px 0 23px;
  background: #4d5a62;
  border: 2px solid #5a6870;
`;
const Ruler = styled.div`
  position: relative;
  flex: 1;
  background: linear-gradient(#a45a5f, #98525a);
  border-top: 2px solid #bd7073;
  border-bottom: 2px solid #b96a6d;
  margin-bottom: 1px;
`;
const RulerNumber = styled.span`
  position: absolute;
  top: 5px;
  transform: translateX(-50%) scaleX(0.72);
  color: #f6caca;
  font-size: 24px;
  letter-spacing: 1px;
`;
const AutoTab = styled.div`
  position: absolute;
  left: 0;
  bottom: 0;
  display: flex;
  align-items: center;
  width: 69px;
  height: 33px;
  padding-left: 3px;
  background: #d27f83;
  clip-path: polygon(0 0, 78% 0, 100% 100%, 0 100%);
  color: #fff;
  font-size: 27px;
  letter-spacing: 1.2px;
`;
const StartFlag = styled.svg`
  position: absolute;
  left: 0;
  top: 1px;
`;

const Rows = styled.div`
  flex: 1;
  min-height: 0;
`;
const Row = styled.div`
  display: flex;
`;
const TrackHead = styled.div`
  flex: none;
  width: 199px;
  display: flex;
  flex-direction: column;
  background: #3a4249;
`;
const HeadMain = styled.div<{ $bg?: string; $color?: string; $lanes: boolean }>`
  height: 72px;
  padding: 0 10px 0 4px;
  background: ${(p) => p.$bg ?? "linear-gradient(#474f56, #434b52)"};
  border-radius: 0 10px ${(p) => (p.$lanes ? "0 10px" : "10px 0")};
  color: ${(p) => p.$color ?? "#dde3e6"};
`;
const TrackName = styled.div`
  height: 32px;
  line-height: 29px;
  font-size: 27px;
  letter-spacing: 1.9px;
  white-space: nowrap;
`;
const ControlRow = styled.div`
  display: flex;
  align-items: center;
  justify-content: flex-end;
  height: 22px;
  margin-top: 11px;
`;
const MoreDots = styled.span`
  margin: 14px auto 0 23px;
  width: 21px;
  height: 4px;
  background: repeating-linear-gradient(90deg, rgba(20, 26, 30, 0.45) 0 5px, transparent 5px 8px);
`;
const Arrow = styled.span<{ $up?: boolean; $color?: string }>`
  width: 0;
  height: 0;
  margin-right: 13px;
  border-left: 9px solid transparent;
  border-right: 9px solid transparent;
  ${(p) =>
    p.$up
      ? `border-bottom: 11px solid ${p.$color ?? "#c4c9cc"};`
      : `border-top: 11px solid ${p.$color ?? "#c4c9cc"};`}
`;
const HeadIconSlot = styled.span<{ $gap: number }>`
  display: flex;
  margin-right: ${(p) => p.$gap}px;
`;
const Led = styled.span`
  width: 22px;
  height: 22px;
  border-radius: 50%;
  border: 2px solid #14200c;
  outline: 1px solid #7a8288;
  background: radial-gradient(circle at 50% 62%, #dcf59a 0, #9fd648 45%, #4f8a18 85%);
`;
const HeadExtra = styled.div<{ $lanes: number }>`
  height: ${(p) => p.$lanes * 8}px;
  background:
    linear-gradient(#454d54, #454d54) 12px 0 / 100% 100% no-repeat,
    repeating-linear-gradient(135deg, #272f35 0 1.5px, #3a4249 1.5px 3px);
  border-radius: 0 0 10px 0;
`;
const Strip = styled.div`
  flex: none;
  width: 23px;
  padding-left: 3px;
  background: #39414a;
`;
const StripInner = styled.div`
  height: 100%;
  background: #2f3a43;
  display: flex;
  flex-direction: column;
`;
const StripMain = styled.div`
  height: 72px;
  border-bottom: 1.5px solid #1d252e;
`;
const StripLane = styled.div`
  height: 8px;
  border-bottom: 1.5px solid #1d252e;
`;
const Canvas = styled.div`
  flex: 1;
  min-width: 0;
  background:
    repeating-linear-gradient(90deg, #1c2431 0 2px, transparent 2px ${BAR}px),
    repeating-linear-gradient(90deg, #404853 ${-BAR}px ${BAR * 3}px, #3b434d ${BAR * 3}px ${BAR * 7}px);
`;
const MainLane = styled.div`
  position: relative;
  height: 72px;
  border-bottom: 1.5px solid #1b2230;
`;
const Lane = styled.div`
  position: relative;
  height: 8px;
  border-bottom: 1.5px solid #1b2230;
  background: rgba(255, 255, 255, 0.015);
`;
const LaneChip = styled.div<{ $bg: string }>`
  position: absolute;
  top: 0;
  height: 6.5px;
  background: ${(p) => p.$bg};
  box-shadow: inset 0 1px 0 rgba(255, 255, 255, 0.1);
  border-radius: 1px;
`;
const ClipBox = styled.div<{ $dim?: boolean }>`
  position: absolute;
  top: 1px;
  height: 70px;
  display: flex;
  flex-direction: column;
  opacity: ${(p) => (p.$dim ? 0.75 : 1)};
`;
const ClipHead = styled.div<{ $bg: string; $color: string }>`
  flex: none;
  height: 28px;
  display: flex;
  align-items: center;
  gap: 6px;
  padding-left: 3px;
  background: ${(p) => p.$bg};
  border-radius: 3px;
  box-shadow: inset 0 -1px 0 rgba(0, 0, 0, 0.2), inset 0 1px 0 rgba(255, 255, 255, 0.06);
  color: ${(p) => p.$color};
  font-size: 25px;
  letter-spacing: 1.15px;
`;
const ClipBody = styled.div<{ $bg: string }>`
  position: relative;
  flex: 1;
  margin-top: 1px;
  background: ${(p) => p.$bg};
  opacity: 0.93;
  overflow: hidden;
`;
const FadeLine = styled.svg`
  position: absolute;
  right: 0;
  top: 0;
`;

const SideScroll = styled.div`
  flex: none;
  width: 40px;
  display: flex;
  flex-direction: column;
  gap: 2px;
  padding: 2px 2px 0 0;
  background: #333c44;
`;

/* ---------- components ---------- */

const Chevron = ({ d }: { d: string }) => (
  <svg width={16} height={16} viewBox="0 0 16 16" fill="none" stroke="#20282e" strokeWidth={1.8}>
    <path d={d} />
  </svg>
);

const ClipView = ({ clip, theme, seed }: { clip: Clip; theme: Theme; seed: number }) => {
  const width = clip.w * BAR;
  const bodyH = 41;
  const iconColor = clip.faint ? "#7f8990" : undefined;
  return (
    <ClipBox $dim={clip.faint} style={{ left: 1 + clip.k * BAR, width: width + 0.2 }}>
      <ClipHead $bg={clip.dim ? "#44505a" : theme.head} $color={theme.text}>
        {clip.icon === "pat" && <PatIcon color={iconColor} />}
        {clip.icon === "wave" && <AudioIcon />}
        {clip.icon === "x" && <MutedIcon />}
        {clip.label && <Narrow $s={theme.squeeze ?? 0.75}>{clip.label}</Narrow>}
      </ClipHead>
      <ClipBody $bg={theme.body}>
        {clip.wave && (
          <WaveForm
            wave={clip.wave}
            w={clip.waveW ?? width}
            h={bodyH}
            color={clip.dim ? "#7d8f8a" : theme.ink}
            seed={seed}
          />
        )}
        {theme.pat && (
          <Notes
            pat={theme.pat}
            w={width}
            h={bodyH}
            span={theme.span ?? width}
            color={theme.ink}
            thick={theme.thick ?? 2}
            dash={theme.dash}
          />
        )}
        {clip.fade && (
          <FadeLine width={12} height={41} viewBox="0 0 12 41">
            <path d="M1 0C5 12 8 28 10 41" stroke="#c9d6d0" strokeWidth={1.4} fill="none" />
          </FadeLine>
        )}
      </ClipBody>
    </ClipBox>
  );
};

const TrackRow = ({ track, index }: { track: Track; index: number }) => {
  const laneList = Array.from({ length: track.lanes }, (_, i) => i);
  return (
    <Row>
      <TrackHead>
        <HeadMain $bg={track.bg} $color={track.text} $lanes={track.lanes > 0}>
          <TrackName>
            <Narrow $s={track.squeeze ?? 0.77}>{track.name}</Narrow>
          </TrackName>
          <ControlRow>
            <MoreDots />
            {track.headIcon === "pat" && (
              <HeadIconSlot $gap={track.arrow ? 19 : 15}>
                <PatIcon w={23} h={28} color={track.arrow ? "#f0f0d8" : "#f4fbf2"} />
              </HeadIconSlot>
            )}
            {track.headIcon === "wave" && (
              <HeadIconSlot $gap={11}>
                <WaveGlyph color="#f2f6ef" w={31} h={24} slim />
              </HeadIconSlot>
            )}
            {track.arrow && <Arrow $up={track.arrow === "up"} $color={track.arrowColor} />}
            <Led />
          </ControlRow>
        </HeadMain>
        {track.lanes > 0 && <HeadExtra $lanes={track.lanes} />}
      </TrackHead>
      <Strip>
        <StripInner>
          <StripMain />
          {laneList.map((i) => (
            <StripLane key={i} />
          ))}
        </StripInner>
      </Strip>
      <Canvas>
        <MainLane>
          {track.clips.map((clip, i) => (
            <ClipView key={i} clip={clip} theme={track.theme} seed={index * 31 + i} />
          ))}
        </MainLane>
        {laneList.map((lane) => (
          <Lane key={lane}>
            {(track.strips ?? [])
              .filter((s) => s[0] === lane)
              .map(([, a, b, color]) => (
                <LaneChip key={a} $bg={color} style={{ left: a - ORIGIN, width: b - a }} />
              ))}
          </Lane>
        ))}
      </Canvas>
    </Row>
  );
};

export default function App() {
  const numbers = Array.from({ length: 22 }, (_, i) => 5 + i * 4);
  return (
    <Page>
      <Global />
      <PickerPanel>
        <PickerTop>
          <PianoGlyph color="#e4e9ec" />
          <WaveGlyph color="#566169" />
          <KnobGlyph color="#566169" />
        </PickerTop>
        <PickerBody>
          <PickerList>
            {pickerItems.map((item) => (
              <PickerItem key={item.name}>
                <ItemHead $bg={item.head} $color={item.text}>
                  {item.icon === "dot" ? <ChannelDot /> : <PatIcon />}
                  <Narrow $s={0.76}>{item.name}</Narrow>
                </ItemHead>
                <ItemBody $bg={item.body}>
                  {item.pat && (
                    <Notes
                      pat={item.pat}
                      w={270}
                      h={79}
                      span={270}
                      color={item.ink ?? "#a9b5ba"}
                      thick={item.thick ?? 3}
                    />
                  )}
                </ItemBody>
              </PickerItem>
            ))}
          </PickerList>
          <ScrollCol>
            <ScrollBtn $h={27}>
              <SmallBar />
            </ScrollBtn>
            <ScrollBtn $h={26}>
              <Chevron d="M2 10.5L8 5L14 10.5" />
            </ScrollBtn>
            <ScrollThumb $h={683} />
            <ScrollHatch />
            <ScrollBtn $h={26}>
              <Chevron d="M2 5.5L8 11L14 5.5" />
            </ScrollBtn>
          </ScrollCol>
        </PickerBody>
        <PickerFooter>+</PickerFooter>
        <PlayMarker />
      </PickerPanel>

      <Workspace>
        <TopArea>
          <Tools>
            <AddTab>+</AddTab>
            <ToolBox>
              <ToolIcons>
                <WaveGlyph color="#6f777c" />
                <KnobGlyph color="#d5dadd" />
                <PianoGlyph color="#7a828a" />
              </ToolIcons>
              <ToolOptions>
                <OptionLabel $w={30}>
                  <Narrow $s={0.82}>STEP</Narrow>
                </OptionLabel>
                <StepToggle />
                <OptionLabel $w={37}>
                  <Narrow $s={0.82}>SLIDE</Narrow>
                </OptionLabel>
                <SlideRadio />
              </ToolOptions>
            </ToolBox>
          </Tools>
          <TopRight>
            <OverviewBar>
              <NavBtn>
                <Chevron d="M10.5 2L5 8L10.5 14" />
              </NavBtn>
              <Overview>
                <svg width="100%" height="100%" viewBox="52 6 1458 114" preserveAspectRatio="none">
                  {overviewMarks.map(([a, b, y, h, color], i) => (
                    <rect key={i} x={a} y={y} width={b - a} height={h} fill={color} />
                  ))}
                  <path d="M53 12H60L53 30Z" fill="#e8e8b0" />
                </svg>
              </Overview>
              <NavBtn>
                <Chevron d="M5.5 2L11 8L5.5 14" />
              </NavBtn>
            </OverviewBar>
            <Ruler>
              <StartFlag width={18} height={22} viewBox="0 0 18 22">
                <path d="M0 1H17L13 10L1 21H0Z" fill="#1d2a14" />
                <path d="M0 3H14L10 10L1 18H0Z" fill="#c5dc5c" />
              </StartFlag>
              {numbers.map((n) => (
                <RulerNumber key={n} style={{ left: 1 + (n - 1) * BAR - (n < 10 ? 20 : 16.5) }}>
                  {n}
                </RulerNumber>
              ))}
              <AutoTab>
                <Narrow $s={0.7}>Auto</Narrow>
              </AutoTab>
            </Ruler>
          </TopRight>
        </TopArea>
        <Rows>
          {tracks.map((track, i) => (
            <TrackRow key={track.name} track={track} index={i} />
          ))}
        </Rows>
      </Workspace>

      <SideScroll>
        <ScrollBtn $h={38}>
          <SmallBar $dot />
        </ScrollBtn>
        <ScrollBtn $h={38}>
          <Chevron d="M2 10.5L8 5L14 10.5" />
        </ScrollBtn>
        <ScrollThumb $h={66} />
        <ScrollHatch />
      </SideScroll>
    </Page>
  );
}
